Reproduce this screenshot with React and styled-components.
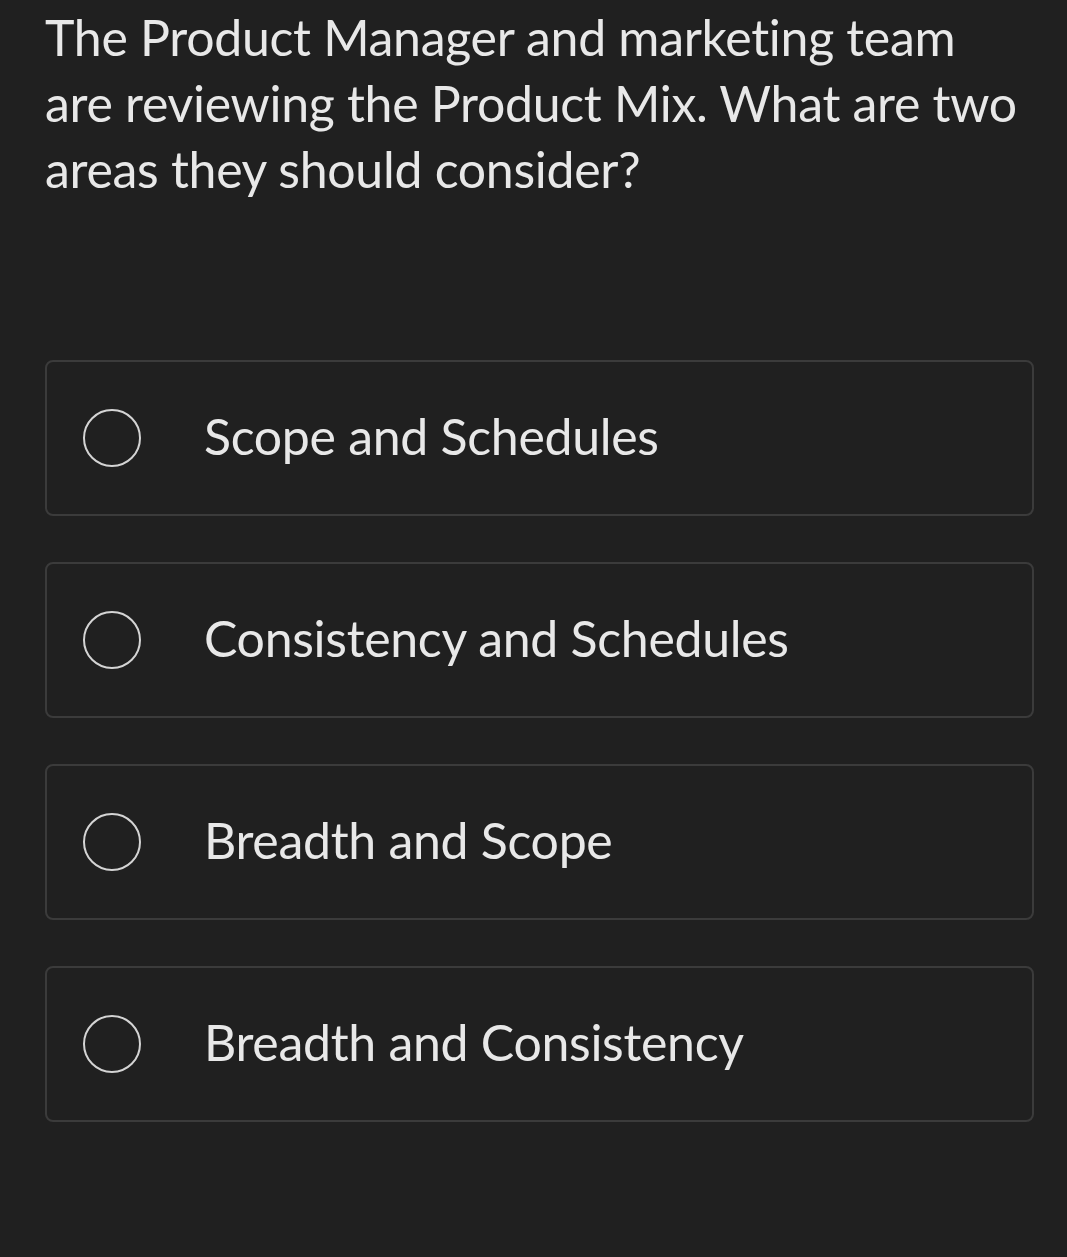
import React from 'react'
import styled, { createGlobalStyle } from 'styled-components'

const GlobalStyle = createGlobalStyle`
    html, body {
        margin: 0;
        padding: 0;
        background-color: #202020;
    }
    body {
        font-family: Lato, "Noto Sans", sans-serif;
    }
`

const Page = styled.div`
    width: 1067px;
    min-height: 1257px;
    box-sizing: border-box;
    padding: 4px 33px 0 45px;
    background-color: #202020;
`

const Question = styled.h1`
    margin: 0;
    max-width: 985px;
    font-size: 50px;
    font-weight: 400;
    letter-spacing: -0.3px;
    line-height: 66px;
    color: #e8e8e8;
`

const Options = styled.div`
    display: flex;
    flex-direction: column;
    gap: 46px;
    margin-top: 158px;
`

const OptionCard = styled.label`
    display: flex;
    align-items: center;
    height: 156px;
    box-sizing: border-box;
    padding-left: 36px;
    border: 2px solid #3b3b3b;
    border-radius: 8px;
    cursor: pointer;
`

const Radio = styled.span`
    width: 58px;
    height: 58px;
    box-sizing: border-box;
    border: 2px solid #d4d4d4;
    border-radius: 50%;
    flex-shrink: 0;
`

const OptionText = styled.span`
    margin-left: 63px;
    margin-bottom: 4px;
    font-size: 50px;
    letter-spacing: -0.3px;
    color: #e8e8e8;
`

function App() {
    const options = [
        { id: 1, label: 'Scope and Schedules' },
        { id: 2, label: 'Consistency and Schedules' },
        { id: 3, label: 'Breadth and Scope' },
        { id: 4, label: 'Breadth and Consistency' }
    ];

    return (
        <Page>
            <GlobalStyle />
            <Question>
                The Product Manager and marketing team are reviewing the Product Mix. What are two areas they should consider?
            </Question>
            <Options>
                {options.map((option) => (
                    <OptionCard key={option.id}>
                        <Radio />
                        <OptionText>{option.label}</OptionText>
                    </OptionCard>
                ))}
            </Options>
        </Page>
    )
}

export default App
